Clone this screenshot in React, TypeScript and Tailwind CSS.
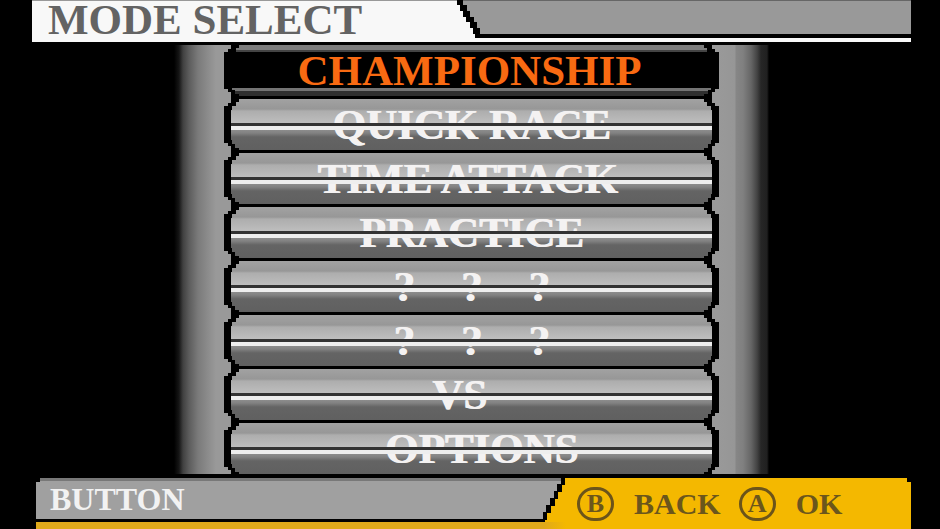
import React, { useState } from "react";

type Mode = { id: string; parts: string[]; className?: string };

const MODES: Mode[] = [
  { id: "championship", parts: ["CHAMPIONSHIP"], className: "pr-1" },
  { id: "quick-race", parts: ["QUICK RACE"] },
  { id: "time-attack", parts: ["TIME ATTACK"], className: "pr-2" },
  { id: "practice", parts: ["PRACTICE"] },
  { id: "locked-1", parts: ["?", "?", "?"] },
  { id: "locked-2", parts: ["?", "?", "?"] },
  { id: "vs", parts: ["VS"], className: "pr-6" },
  { id: "options", parts: ["OPTIONS"], className: "pl-5" },
];

/* Stepped notch where two bars meet; its middle sits on the dividing line. */
function Notch({ className }: { className: string }) {
  return (
    <svg
      aria-hidden="true"
      width="15"
      height="24"
      viewBox="0 0 15 24"
      shapeRendering="crispEdges"
      className={`absolute z-10 ${className}`}
    >
      <path
        fill="#000"
        d="M0 0H8V4H11V8H15V16H12V20H8V24H0Z"
      />
      <path fill="#999" d="M0 3H4V6H7V17H4V20H0Z" />
    </svg>
  );
}

function ModeRow({
  mode,
  selected,
  onSelect,
}: {
  mode: Mode;
  selected: boolean;
  onSelect: () => void;
}) {
  return (
    <li className="relative">
      <Notch className="-top-[10px] left-0" />
      <Notch className="-top-[10px] right-0 -scale-x-100" />
      <button
        type="button"
        aria-pressed={selected}
        onClick={onSelect}
        className={
          selected
            ? "relative block h-[54px] w-full border-t-3 border-black bg-black text-[#f96a12]"
            : "relative block h-[54px] w-full border-x-7 border-t-3 border-black bg-[linear-gradient(#a2a2a2_0px,#979797_10px,#adadad_12px,#bebebe_24px,#8c8c8c_31px,#828282_34px,#646464_38px,#606060_51px)] text-[#f4f2f2] [text-shadow:1px_0_0_#f4f2f2]"
        }
      >
        {selected && (
          <>
            <span className="absolute inset-x-[10px] top-0 h-[7px] border-b-2 border-[#444] bg-[#7c7c7c]" />
            <span className="absolute inset-x-[7px] bottom-0 h-2 border-t-3 border-[#747474] bg-[#303030]" />
          </>
        )}
        <span
          className={`flex items-center justify-center gap-[46px] text-[43px] leading-[51px] font-bold whitespace-nowrap ${mode.className ?? ""}`}
        >
          {mode.parts.map((part, i) => (
            <span key={i}>{part}</span>
          ))}
        </span>
        {!selected && (
          <span className="absolute inset-x-0 top-6 h-[7px] border-t-3 border-[#333] bg-[#eee]" />
        )}
      </button>
    </li>
  );
}

function PadButton({ pad, label }: { pad: string; label: string }) {
  return (
    <button
      type="button"
      className="flex items-center gap-5 text-[30px] leading-[34px] font-bold text-[#6b561c]"
    >
      <span className="flex h-[34px] w-[37px] items-center justify-center rounded-full border-3 border-[#6b541a] text-[26px] leading-7">
        {pad}
      </span>
      {label}
    </button>
  );
}

export default function App() {
  const [selected, setSelected] = useState("championship");

  return (
    <div className="flex min-h-screen flex-col bg-black pr-[29px] pl-8 font-['Liberation_Serif',serif]">
      <header className="flex border-b-4 border-[#f8f8f8] bg-[#f8f8f8]">
        <h1 className="w-[425px] shrink-0 border-t border-[#999] pl-4 text-[43px] leading-[37px] font-bold whitespace-nowrap text-[#636363]">
          MODE SELECT
        </h1>
        <svg
          aria-hidden="true"
          width="24"
          height="38"
          viewBox="0 0 24 38"
          shapeRendering="crispEdges"
          className="shrink-0"
        >
          <path fill="#999" d="M0 0H24V38H0Z" />
          <path fill="#666" d="M0 0H24V1H0Z" />
          <path
            fill="#000"
            d="M0 0H6V5H10V11H13V17H17V22H20V28H23V34H24V38H18V34H16V28H13V22H9V17H6V11H3V5H0Z"
          />
          <path
            fill="#f8f8f8"
            d="M0 5H3V11H6V17H9V22H13V28H16V34H18V38H0Z"
          />
        </svg>
        <div className="min-w-0 flex-1 border-t border-b-4 border-t-[#666] border-b-black bg-[#999]" />
      </header>

      <main className="mx-auto flex w-full max-w-[595px] overflow-hidden">
        <div className="mt-[3px] w-[50px] shrink-0 bg-[linear-gradient(90deg,#000_0px,#161616_5px,#404040_9px,#5c5c5c_15px,#7a7a7a_24px,#8c8c8c_34px,#999_42px)]" />
        <div className="relative min-w-0 flex-1">
          <ul>
            {MODES.map((mode) => (
              <ModeRow
                key={mode.id}
                mode={mode}
                selected={mode.id === selected}
                onSelect={() => setSelected(mode.id)}
              />
            ))}
          </ul>
          <Notch className="-bottom-[14px] left-0" />
          <Notch className="right-0 -bottom-[14px] -scale-x-100" />
          <span className="absolute inset-x-0 top-0 z-20 h-[3px] bg-black" />
        </div>
        <div className="mt-[3px] w-[50px] shrink-0 bg-[linear-gradient(90deg,#999_0px,#969696_16px,#868686_17px,#808080_24px,#666_32px,#444_38px,#262626_42px,#202020_48px,#000_50px)]" />
      </main>

      <footer className="relative ml-1 border-t-4 border-black bg-black">
        <div className="flex min-w-0 bg-[#f4b800]">
          <div className="h-[44px] w-[507px] shrink-0 border-t-3 border-b-3 border-t-[#787878] border-b-black bg-[#a0a0a0] pl-[14px] text-[32px] leading-[37px] font-bold text-[#f2f2f2]">
            BUTTON
          </div>
          <svg
            aria-hidden="true"
            width="22"
            height="44"
            viewBox="0 0 22 44"
            shapeRendering="crispEdges"
            className="shrink-0"
          >
            <path
              fill="#a0a0a0"
              d="M0 0H18V6H15V13H11V20H7V27H4V34H0Z"
            />
            <path fill="#787878" d="M0 0H18V3H0Z" />
            <path
              fill="#000"
              d="M18 0H22V7H19V14H15V21H12V28H8V35H4V42H2V44H0V34H3V27H7V20H11V13H14V6H18Z"
            />
          </svg>
          <nav
            aria-label="Controls"
            className="flex items-start gap-[18px] pt-[9px] pl-3"
          >
            <PadButton pad="B" label="BACK" />
            <PadButton pad="A" label="OK" />
          </nav>
        </div>
        <div className="h-[7px] bg-[linear-gradient(90deg,#dfa91a_0px,#dfa91a_507px,#f4b800_530px)]" />
        <span className="absolute top-0 left-0 h-1 w-1 bg-black" />
        <span className="absolute top-0 right-0 h-1 w-1 bg-black" />
      </footer>
    </div>
  );
}
